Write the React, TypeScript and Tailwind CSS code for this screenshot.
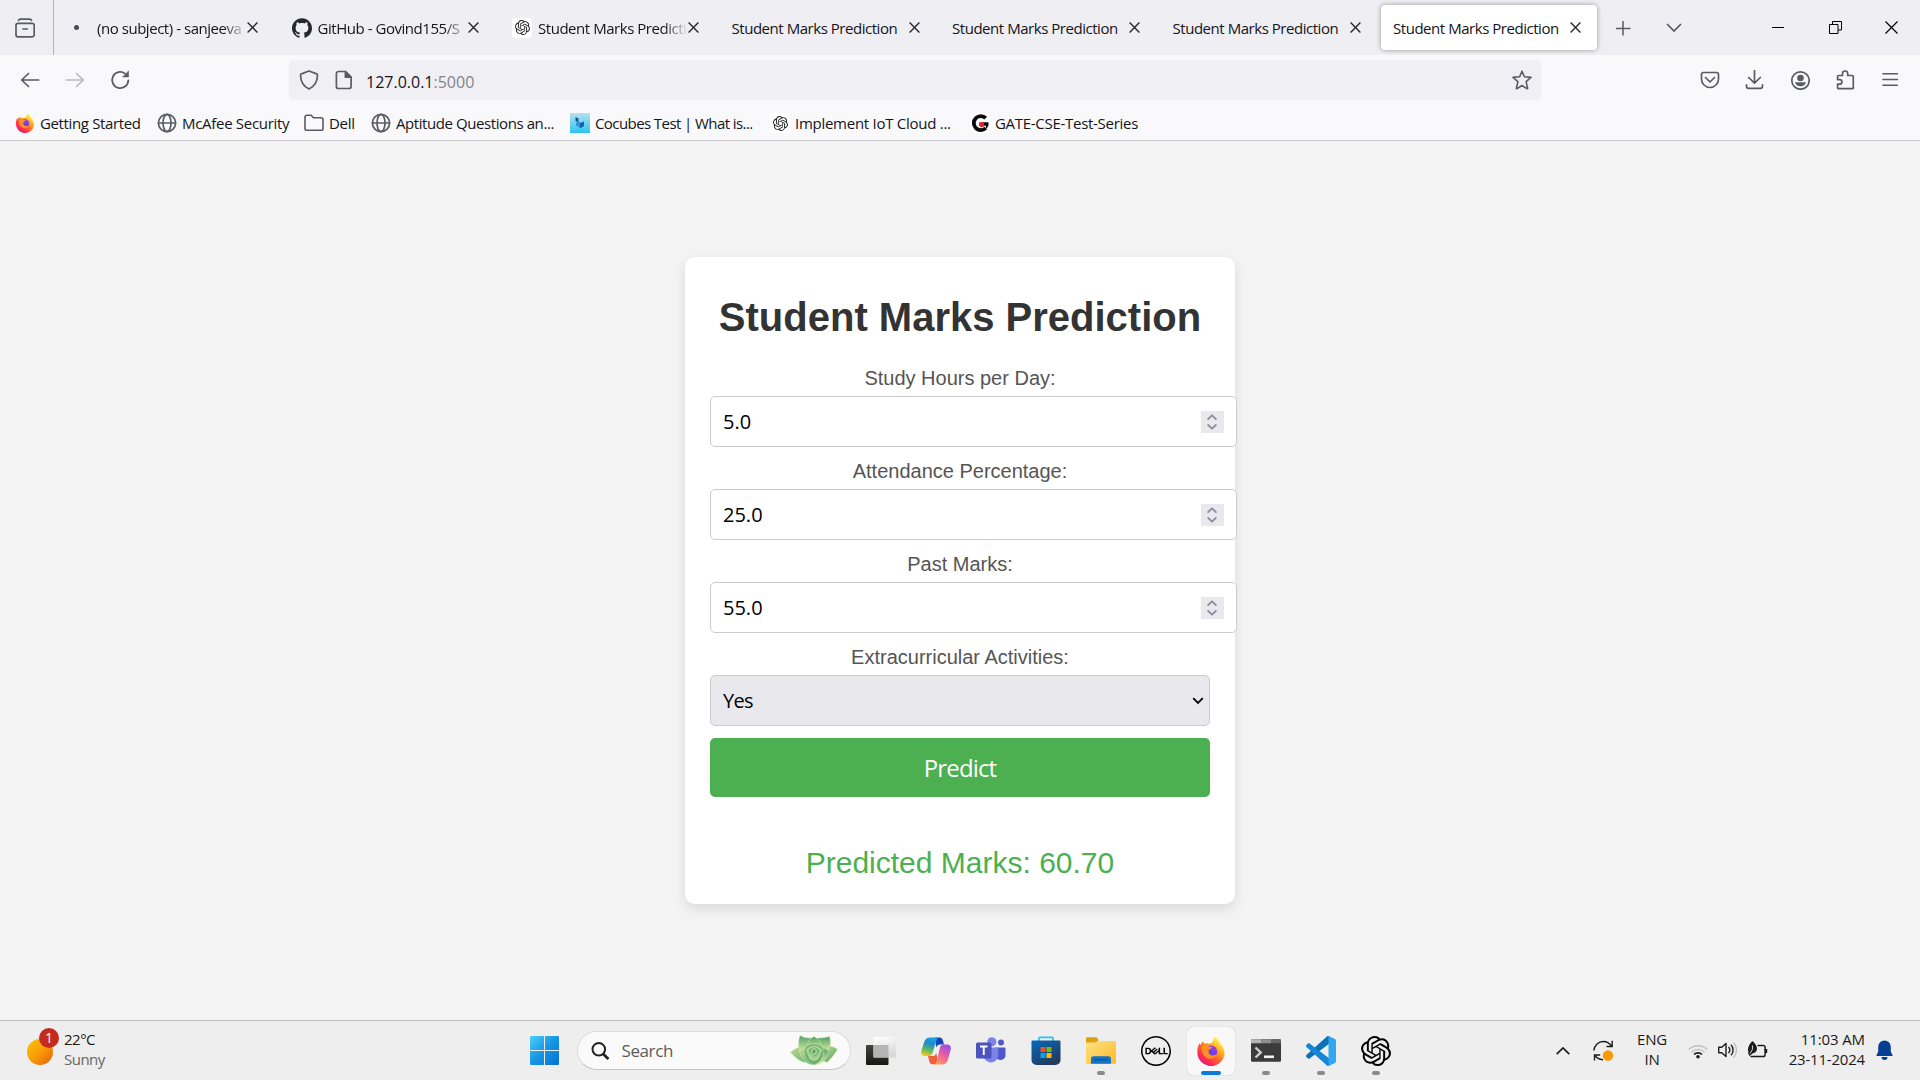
import React, { ReactNode } from "react";
import { SiDell, SiGithub, SiOpenai } from "react-icons/si";

type SvgProps = { className?: string };

function Stroke({ children, className = "size-5", width = 1.6, box = 20 }: { children: ReactNode; className?: string; width?: number; box?: number }) {
  return (
    <svg viewBox={`0 0 ${box} ${box}`} className={className} fill="none" stroke="currentColor" strokeWidth={width} strokeLinecap="round" strokeLinejoin="round">
      {children}
    </svg>
  );
}

function Firefox({ className, id }: SvgProps & { id: string }) {
  return (
    <svg viewBox="0 0 32 32" className={className}>
      <defs>
        <linearGradient id={`${id}-b`} x1="0.85" y1="0.1" x2="0.2" y2="0.95">
          <stop offset="0.05" stopColor="#fff44f" />
          <stop offset="0.3" stopColor="#ffb01f" />
          <stop offset="0.55" stopColor="#ff6a2c" />
          <stop offset="0.8" stopColor="#ff2b50" />
          <stop offset="1" stopColor="#e31587" />
        </linearGradient>
        <linearGradient id={`${id}-p`} x1="0.8" y1="0" x2="0.2" y2="1">
          <stop offset="0" stopColor="#a13bf0" />
          <stop offset="1" stopColor="#4b3fd0" />
        </linearGradient>
      </defs>
      <path fill={`url(#${id}-b)`} d="M20.2 0.8c3 2 4.6 4.300 5.200 6.900 1.400 0.900 2.500 2.200 3.200 3.700 1.600 3.200 2.200 6.200 1.600 9.200A14.500 14.500 0 0 1 1.500 17.500C1.200 13 2.500 9.800 4.100 7.500c0.100 1 0.300 1.500 0.800 2.100C5.800 7.400 6.500 6.500 8 5.400c-0.100 1.300 0.200 2.200 1 2.800 1.500-0.500 3-0.500 4.500 0 2-0.200 3.400-0.700 4.300-2C18.300 4.300 18.800 2.200 20.200 0.800z" />
      <circle cx="16" cy="16.800" r="6.700" fill={`url(#${id}-p)`} />
      <path fill="#ff9022" d="M6.500 11.200c2-1.800 5-1.700 7 0.100 1.200 0.200 2.600 0.300 3.800 0.400-0.500 1.800-2.300 2-3.600 2.900-0.600 1.800-0.300 3.600 1 5 2.700 2 5.800 1.100 7.500-1-1 4.900-6 7-10.200 5C7.500 21.500 5.500 16.500 6.500 11.200z" />
    </svg>
  );
}

function Globe() {
  return (
    <Stroke className="size-5 text-[#5b5b66]" width={1.7}>
      <circle cx="10" cy="10" r="8.600" />
      <ellipse cx="10" cy="10" rx="4" ry="8.600" />
      <path d="M1.500 10h17" />
    </Stroke>
  );
}

function OpenAiTile() {
  return (
    <span className="flex size-5 items-center justify-center rounded bg-white">
      <SiOpenai className="size-[15px] text-[#222]" />
    </span>
  );
}

function Cocubes() {
  return (
    <svg viewBox="0 0 20 20" className="size-5">
      <defs>
        <linearGradient id="coc" x1="0" y1="0" x2="0" y2="1">
          <stop offset="0" stopColor="#b4e2f0" />
          <stop offset="1" stopColor="#2cc4ef" />
        </linearGradient>
      </defs>
      <rect width="20" height="20" fill="url(#coc)" />
      <path fill="#17558f" d="M5.500 4l3 1.500v4l-3-1.500z" />
      <path fill="#2f93dc" d="M6 9.500l4-0.500v6l-4-2.500z" />
      <path fill="#1460ae" d="M10 10l4-1.500v4.500l-4 2.500z" />
    </svg>
  );
}

function Gate() {
  return (
    <svg viewBox="0 0 20 20" className="size-5">
      <rect width="20" height="20" fill="#fff" />
      <path d="M15.800 5.200A7 7 0 1 0 15.800 15" fill="none" stroke="#0a0a0a" strokeWidth="3.800" />
      <path d="M11 9.300h7.500v3.200c-0.600 1.500-1.500 2.500-2.600 3.200v-3h-2z" fill="#0a0a0a" />
      <path d="M9 9.200h5v4.200l-3 0.800-2-2z" fill="#ee1c25" />
    </svg>
  );
}

function CloseX({ className = "size-[11px]" }: SvgProps) {
  return (
    <svg viewBox="0 0 11 11" className={className} stroke="#25252c" strokeWidth="1.350" fill="none">
      <path d="M0.600 0.600l9.800 9.800M10.400 0.600L0.600 10.400" />
    </svg>
  );
}

type TabInfo = { title: string; icon?: ReactNode; active?: boolean; fade?: boolean };

const tabs: TabInfo[] = [
  { title: "(no subject) - sanjeeva", icon: <span className="ml-[3px] size-[5px] rounded-full bg-[#4a4a55]" />, fade: true },
  { title: "GitHub - Govind155/S", icon: <SiGithub className="size-5 text-[#24292f]" />, fade: true },
  { title: "Student Marks Prediction", icon: <OpenAiTile />, fade: true },
  { title: "Student Marks Prediction" },
  { title: "Student Marks Prediction" },
  { title: "Student Marks Prediction" },
  { title: "Student Marks Prediction", active: true },
];

function Tab({ tab }: { tab: TabInfo }) {
  return (
    <div className={`flex h-[45px] w-[216px] shrink-0 items-center rounded pl-3 ${tab.active ? "bg-white shadow-[0_0_5px_rgba(0,0,0,0.38)]" : ""}`}>
      {tab.icon && <span className="flex w-[27px] shrink-0 items-center pl-px">{tab.icon}</span>}
      <span
        className={`overflow-hidden whitespace-nowrap text-[15px] leading-5 tracking-[-0.46px] ${
          tab.icon ? "w-[150px]" : "w-[177px]"
        } ${tab.fade ? "[mask-image:linear-gradient(to_right,black_84%,transparent_100%)]" : ""}`}
      >
        {tab.title}
      </span>
      <CloseX />
    </div>
  );
}

function TabStrip() {
  return (
    <div className="flex h-[55px] items-center bg-[#efeef3]">
      <div className="flex h-full w-[54px] shrink-0 items-center border-r border-[#b4b3ba] pl-[15px] text-[#5b5b66]">
        <Stroke width={1.700}>
          <rect x="1" y="5.300" width="18.200" height="13.500" rx="2" />
          <path d="M3.500 2.300Q4 1.200 5.200 1.200h9.600q1.200 0 1.700 1.100M8 11h4.200" />
        </Stroke>
      </div>
      <div className="ml-1 flex gap-[4.5px]">
        {tabs.map((t, i) => (
          <Tab key={i} tab={t} />
        ))}
      </div>
      <svg viewBox="0 0 16 16" className="ml-[18px] size-4 text-[#5b5b66]" stroke="currentColor" strokeWidth="1.500">
        <path d="M8 1v14.500M1 8.500h14.500" />
      </svg>
      <svg viewBox="0 0 16 10" className="ml-[35px] h-2.5 w-4 text-[#5b5b66]" stroke="currentColor" strokeWidth="1.700" fill="none">
        <path d="M1 1l7 7 7-7" />
      </svg>
      <div className="ml-auto flex w-[148px] items-center text-black">
        <span className="h-px w-3 bg-black" />
        <svg viewBox="0 0 13 13" className="ml-[45px] size-[13px]" fill="none" stroke="currentColor" strokeWidth="1">
          <path d="M0.500 3.500h8.500v9h-8.500zM3.500 3.500v-3h9v8.500h-3.500" />
        </svg>
        <svg viewBox="0 0 13 13" className="ml-[43px] size-[13px]" stroke="currentColor" strokeWidth="1.200">
          <path d="M0.500 0.500l12 12M12.500 0.500l-12 12" />
        </svg>
      </div>
    </div>
  );
}

function Toolbar() {
  return (
    <div className="flex h-[50px] items-center text-[#5b5b66]">
      <div className="flex w-[289px] shrink-0 items-center gap-[25px] pl-5">
        <Stroke width={1.700}>
          <path d="M1.700 10h17M8.500 3.500L1.700 10l6.800 6.500" />
        </Stroke>
        <span className="opacity-40">
          <Stroke width={1.700}>
            <path d="M1.300 10h17M11.500 3.500l6.800 6.500-6.800 6.500" />
          </Stroke>
        </span>
        <Stroke width={1.800}>
          <path d="M18.300 10.500a8.100 8.100 0 1 1-3.200-6.900" />
          <path d="M18.500 1.300v5.600h-5.600z" fill="currentColor" strokeWidth="0.600" />
        </Stroke>
      </div>
      <div className="flex h-10 w-[1252px] items-center rounded-[5px] bg-[#f0eff4] pl-[10px] pr-[9px]">
        <Stroke width={1.700}>
          <path d="M10 1L17.600 3.900c.6.200.9.700.9 1.300-.2 6-2.500 11-8.500 13.800C4 16.200 1.700 11.200 1.500 5.200c0-.6.300-1.100.9-1.300z" />
        </Stroke>
        <span className="ml-[15px]">
          <Stroke width={1.700}>
            <path d="M4.400 1.500h7l5.700 5.700v9.300a2 2 0 0 1-2 2H4.400a2 2 0 0 1-2-2v-13a2 2 0 0 1 2-2z" />
            <path d="M11.400 1.700v5.500h5.500z" fill="currentColor" />
          </Stroke>
        </span>
        <span className="ml-3 mt-[3px] text-[16px] leading-5 text-[#15141a]">
          127.0.0.1<span className="text-[#85848c]">:5000</span>
        </span>
        <span className="ml-auto">
          <Stroke width={1.600}>
            <path d="M10 1.200l2.400 5.600 6.600.6-4.900 4.200 1.500 6.600c.1.400-.3.700-.7.500L10 15.500l-4.900 3.200c-.4.200-.8-.1-.7-.5l1.500-6.600L1 7.400l6.600-.6z" />
          </Stroke>
        </span>
      </div>
      <div className="ml-[159px] flex items-center gap-[25px]">
        <Stroke width={1.700}>
          <path d="M3.500 2.500h13a2 2 0 0 1 2 2V9a8.500 8.500 0 0 1-17 0V4.500a2 2 0 0 1 2-2zM5.500 7.500L10 12l4.500-4.500" />
        </Stroke>
        <Stroke width={1.700}>
          <path d="M9.500 .5v12.300M3.700 7.500l5.800 5.600 5.800-5.600M1.500 14.800v1.500a2 2 0 0 0 2 2h12a2 2 0 0 0 2-2v-1.500" />
        </Stroke>
        <Stroke width={1.700}>
          <circle cx="10.500" cy="10.500" r="8.700" />
          <circle cx="10.500" cy="8" r="3.300" fill="currentColor" stroke="none" />
          <path d="M5 12.300h11c-.6 2.500-2.700 4-5.500 4s-4.900-1.500-5.500-4z" fill="currentColor" stroke="none" />
        </Stroke>
        <Stroke width={1.700}>
          <path d="M7.500 5.500V3.600a2.600 2.600 0 0 1 5.200 0v1.900h4.600a1 1 0 0 1 1 1v11.200a1 1 0 0 1-1 1H3.600a1 1 0 0 1-1-1v-3.500h2a2.300 2.300 0 0 0 0-4.600h-2V6.500a1 1 0 0 1 1-1z" />
        </Stroke>
        <Stroke width={1.600}>
          <path d="M3 3.700h14.400M3 9.500h14.400M3 15.300h14.400" />
        </Stroke>
      </div>
    </div>
  );
}

function Bookmarks() {
  const item = "flex shrink-0 items-center gap-[5px]";
  return (
    <div className="flex h-9 items-center pl-[15px] text-[15px] leading-5">
      <div className={`${item} w-[142px]`}>
        <Firefox id="ffs" className="size-5" />
        <span className="tracking-[-0.36px]">Getting Started</span>
      </div>
      <div className={`${item} w-[147px] gap-1`}>
        <Globe />
        <span className="tracking-[-0.3px]">McAfee Security</span>
      </div>
      <div className={`${item} w-[67px]`}>
        <span className="text-[#5b5b66]">
          <Stroke width={1.600}>
            <path d="M2.800 2.200h4.400l2.200 2.600h7.800a1.800 1.800 0 0 1 1.800 1.800v8.800a1.800 1.800 0 0 1-1.800 1.800H2.800A1.800 1.800 0 0 1 1 15.400V4a1.800 1.800 0 0 1 1.800-1.800z" />
          </Stroke>
        </span>
        <span className="tracking-[-0.3px]">Dell</span>
      </div>
      <div className={`${item} w-[199px] gap-1`}>
        <Globe />
        <span className="tracking-[-0.42px]">Aptitude Questions an...</span>
      </div>
      <div className={`${item} w-[200px]`}>
        <Cocubes />
        <span className="tracking-[-0.58px]">Cocubes Test | What is...</span>
      </div>
      <div className={`${item} w-[200px]`}>
        <OpenAiTile />
        <span className="tracking-[-0.27px]">Implement IoT Cloud ...</span>
      </div>
      <div className={`${item} gap-1`}>
        <Gate />
        <span className="tracking-[-0.29px]">GATE-CSE-Test-Series</span>
      </div>
    </div>
  );
}

function FieldLabel({ children }: { children: ReactNode }) {
  return <p className="mb-1.5 text-center text-[20px] leading-[23px] text-[#555]">{children}</p>;
}

function NumberField({ label, value }: { label: string; value: string }) {
  return (
    <div className="mb-[13px]">
      <FieldLabel>{label}</FieldLabel>
      <div className="flex h-[51px] w-[527px] items-center justify-between rounded-[5px] border border-[#ccc] bg-white pl-3 pr-[12.5px] font-['Open_Sans',sans-serif] text-[20px] leading-7 text-black">
        <span>{value}</span>
        <span className="flex h-[22px] w-[23px] items-center justify-center bg-[#e9e9ed]">
          <svg viewBox="0 0 10 16" className="h-4 w-2.5" fill="none" stroke="#8f8f9d" strokeWidth="1.800" strokeLinecap="round" strokeLinejoin="round">
            <path d="M1.200 5L5 1.300 8.800 5M1.200 11L5 14.700 8.800 11" />
          </svg>
        </span>
      </div>
    </div>
  );
}

function PredictionCard() {
  return (
    <div className="mt-[116px] h-[647px] w-[550px] rounded-[10px] bg-white px-[25px] pt-[37px] font-['Liberation_Sans',Arial,sans-serif] shadow-[0_5px_12px_rgba(0,0,0,0.1)]">
      <h1 className="mb-[27px] whitespace-nowrap text-center text-[40px] font-bold leading-[46px] text-[#333]">Student Marks Prediction</h1>
      <NumberField label="Study Hours per Day:" value="5.0" />
      <NumberField label="Attendance Percentage:" value="25.0" />
      <NumberField label="Past Marks:" value="55.0" />
      <FieldLabel>Extracurricular Activities:</FieldLabel>
      <div className="flex h-[51px] items-center justify-between rounded-[5px] border border-[#ccc] bg-[#e9e9ed] pl-3 pr-[5px] font-['Open_Sans',sans-serif] text-[20px] leading-7 text-black">
        <span className="tracking-[-0.7px]">Yes</span>
        <svg viewBox="0 0 12 8" className="h-2 w-3" fill="none" stroke="#000" strokeWidth="1.800">
          <path d="M1.200 1.200L6 6l4.800-4.800" />
        </svg>
      </div>
      <button className="mt-3 flex h-[59px] w-full items-center justify-center rounded-[5px] bg-[#4caf50] font-['Open_Sans',sans-serif] text-[24px] leading-8 tracking-[-0.85px] text-white">Predict</button>
      <p className="mt-[48px] text-center text-[30px] leading-[35px] text-[#4caf50]">Predicted Marks: 60.70</p>
    </div>
  );
}

function Succulent() {
  return (
    <svg viewBox="0 0 48 31" className="h-[31px] w-12">
      <defs>
        <linearGradient id="leaf" x1="0" y1="0" x2="0" y2="1">
          <stop offset="0" stopColor="#4f9f68" />
          <stop offset="0.6" stopColor="#a6d08a" />
          <stop offset="1" stopColor="#dce9a0" />
        </linearGradient>
        <linearGradient id="leaf2" x1="0" y1="0" x2="1" y2="1">
          <stop offset="0" stopColor="#c5de97" />
          <stop offset="1" stopColor="#5aa86c" />
        </linearGradient>
      </defs>
      <g stroke="#d3e6aa" strokeWidth="0.500">
        <path fill="url(#leaf2)" d="M0.500 17.500Q6 12 14 11l9 11-9 5.500Q7 25 0.500 17.500z" />
        <path fill="url(#leaf2)" d="M47.500 14.500Q42 10 34 11l-9 11 12 5.500Q43 22 47.500 14.500z" />
        <path fill="url(#leaf)" d="M10 0.500Q15 3.500 21 3l3 12-14 3Q7 8 10 0.500z" />
        <path fill="url(#leaf)" d="M39.500 1.500Q34 3 28 3l-4 12 14 2Q42 9 39.500 1.500z" />
        <path fill="url(#leaf)" d="M24 1.500q6.500 3 6.500 9L24 15l-6.500-4.500q0-6 6.500-9z" />
        <path fill="url(#leaf2)" d="M9 16q5-4 12-3l3 17q-12-1-15-14z" />
        <path fill="url(#leaf)" d="M39 16q-5-4-12-3l-3 17q12-1 15-14z" />
        <path fill="#69b077" d="M14 16q2-7 10-7t10 7q-1 11-10 14-9-3-10-14z" />
        <path fill="#a9d28b" d="M16 15q4-4 8-4t8 4l-4 9q-4 3-8 0z" />
        <path fill="#4a9b62" d="M18.500 16q2-4 5.500-4t5.500 4q0 4-5.500 6-5-2-5.500-6z" />
        <path fill="#8ac580" d="M20.500 16q1-3 3.500-3t3.500 3-3.500 4.500-3.500-4.500z" />
        <circle cx="24" cy="16.500" r="1.700" fill="#3f8f5c" />
      </g>
    </svg>
  );
}

function Copilot() {
  return (
    <svg viewBox="0 0 30 28" className="h-7 w-[30px]">
      <defs>
        <linearGradient id="cp1" x1="0.600" y1="0" x2="0.300" y2="1">
          <stop offset="0" stopColor="#1a9fe6" />
          <stop offset="0.350" stopColor="#1f8fc9" />
          <stop offset="0.650" stopColor="#55b66a" />
          <stop offset="1" stopColor="#f2c91c" />
        </linearGradient>
        <linearGradient id="cp2" x1="0.700" y1="0" x2="0.200" y2="1">
          <stop offset="0" stopColor="#a04de8" />
          <stop offset="0.500" stopColor="#ee5f9d" />
          <stop offset="1" stopColor="#ffa05c" />
        </linearGradient>
      </defs>
      <path fill="#1842b8" d="M14 0.500h4.500c2.200 0 3 1.500 3.500 3.200l1 3.800h-4c-2 0-3 1-3.800 3z" />
      <path fill="#f0603f" d="M7 19h5c2 0 2.600-1 3.200-3l2 8.500c-.6 1.800-2 2.700-4 2.700h-2c-1.800 0-2.500-1.400-3-3.200z" />
      <path fill="url(#cp1)" d="M9 0.500h9.500c-2 .3-2.700 1.500-3.300 3.500l-3.700 12c-.6 2-1.600 3-3.800 3H4c-3.500 0-4.500-2.500-3.500-6L3.200 5C4.200 2 6 0.500 9 0.500z" />
      <path fill="url(#cp2)" d="M21 27.500H12.500c2-.3 2.700-1.500 3.300-3.500l3-13c.6-2 1.800-3.500 4-3.500H26c3.500 0 4.500 2.500 3.500 6L26.800 23c-1 3-2.800 4.500-5.800 4.500z" />
    </svg>
  );
}

function Teams() {
  return (
    <svg viewBox="0 0 30 27" className="h-[27px] w-[30px]">
      <circle cx="25" cy="5.500" r="3" fill="#5059c9" />
      <path d="M19 10.500h9.500a1 1 0 0 1 1 1V18a5 5 0 0 1-9 3z" fill="#5059c9" />
      <circle cx="15.800" cy="4.800" r="4.600" fill="#7b83eb" />
      <path d="M8 10.500h13a1.200 1.200 0 0 1 1.200 1.200V19a7.300 7.300 0 0 1-14.500 0z" fill="#7b83eb" />
      <rect x="0" y="5.500" width="15.500" height="16" rx="1.500" fill="#4b53bc" />
      <path d="M4 9.500h7.500M7.750 9.500v8.500" stroke="#fff" strokeWidth="1.900" />
    </svg>
  );
}

function Store() {
  return (
    <svg viewBox="0 0 30 29" className="h-[29px] w-[30px]">
      <defs>
        <linearGradient id="store" x1="0" y1="0" x2="0.600" y2="1">
          <stop offset="0" stopColor="#0669bd" />
          <stop offset="1" stopColor="#243a5e" />
        </linearGradient>
      </defs>
      <path d="M8 6V2.500a1.200 1.200 0 0 1 1.200-1.200h11.600a1.200 1.200 0 0 1 1.200 1.200V6" fill="none" stroke="#20c5f5" strokeWidth="1.700" />
      <path d="M0.500 5.500a1 1 0 0 1 1-1h27a1 1 0 0 1 1 1V24a5 5 0 0 1-5 5H5.500a5 5 0 0 1-5-5z" fill="url(#store)" />
      <path fill="#f25022" d="M9.500 11h5v5h-5z" />
      <path fill="#7fba00" d="M15.500 11h5v5h-5z" />
      <path fill="#00a4ef" d="M9.500 17h5v5h-5z" />
      <path fill="#ffb900" d="M15.500 17h5v5h-5z" />
    </svg>
  );
}

function Explorer() {
  return (
    <svg viewBox="0 0 30 27" className="h-[27px] w-[30px]">
      <defs>
        <linearGradient id="fold" x1="0" y1="0" x2="1" y2="1">
          <stop offset="0" stopColor="#ffe08a" />
          <stop offset="1" stopColor="#fdbb22" />
        </linearGradient>
      </defs>
      <path fill="#dd9f0f" d="M0 1.500A1.200 1.200 0 0 1 1.200 0.300h8.500q1 0 1.600.8L12.500 3l-2 4H0z" />
      <path fill="url(#fold)" d="M0 5.500h8.500q1 0 1.700-.7l.8-.8h17.800A1.200 1.200 0 0 1 30 5.200V25.500A1.200 1.200 0 0 1 28.800 26.700H1.200A1.200 1.200 0 0 1 0 25.500z" />
      <path fill="#1173c6" d="M5 26.700v-5a2.500 2.500 0 0 1 2.500-2.500h15a2.500 2.500 0 0 1 2.500 2.500v5z" />
      <path stroke="#0a4a86" strokeWidth="1.100" d="M8.500 22.800h13" />
    </svg>
  );
}

function Terminal() {
  return (
    <svg viewBox="0 0 30 23" className="h-[23px] w-[30px]">
      <rect x="0" y="0.300" width="30" height="22.400" rx="1.300" fill="#3b3b3b" />
      <path fill="#b5b5b5" d="M1.300 0.300h9.200v4H0V1.600A1.300 1.300 0 0 1 1.300 0.300z" />
      <path fill="#8e8e8e" d="M10.500 0.300h10v4h-10z" />
      <path fill="#666" d="M20.500 0.300h8.200A1.300 1.300 0 0 1 30 1.600v2.700h-9.500z" />
      <path stroke="#d0d0d0" strokeWidth="2.400" fill="none" d="M4.500 8.500l5.200 5-5.200 5" />
      <path fill="#f3f3f3" d="M13 16.500h10v2.600H13z" />
    </svg>
  );
}

function VsCode() {
  return (
    <svg viewBox="0 0 100 100" className="size-[30px]">
      <path fill="#0c71b8" d="M96.500 10.800L75.900 .9c-2.400-1.200-5.200-.7-7.100 1.200L1.300 63.600c-1.800 1.700-1.800 4.500 0 6.200l5.500 5c1.500 1.300 3.700 1.400 5.300.2L93.400 13.300c2.700-2 6.600-.1 6.600 3.300v-.2c0-2.400-1.400-4.600-3.500-5.600z" />
      <path fill="#1487d2" d="M96.500 89.200l-20.600 9.900c-2.400 1.200-5.200.7-7.100-1.200L1.300 36.400c-1.800-1.700-1.800-4.500 0-6.200l5.500-5c1.500-1.300 3.700-1.400 5.300-.2l81.300 61.700c2.700 2 6.600.1 6.600-3.300v.2c0 2.400-1.400 4.600-3.500 5.600z" />
      <path fill="#2fa7f2" d="M75.900 99.100c-2.400 1.200-5.200.7-7.100-1.200 2.300 2.300 6.200.7 6.200-2.600V4.700c0-3.300-3.900-4.900-6.200-2.600 1.900-1.900 4.700-2.400 7.100-1.200l20.600 9.900c2.100 1 3.500 3.200 3.500 5.600v67.200c0 2.400-1.400 4.600-3.500 5.600z" />
    </svg>
  );
}

function TaskItem({ children, state }: { children: ReactNode; state?: "running" | "active" }) {
  return (
    <div className={`relative flex h-12 w-12 shrink-0 items-center justify-center rounded-md ${state === "active" ? "bg-[#f8f8f8] shadow-[0_0_1px_rgba(0,0,0,0.3)]" : ""}`}>
      {children}
      {state === "active" && <span className="absolute bottom-0 left-3.5 h-1 w-5 rounded-full bg-[#0f79d6]" />}
      {state === "running" && <span className="absolute bottom-0 left-5 h-1 w-2 rounded-full bg-[#8a8a8a]" />}
    </div>
  );
}

function Taskbar() {
  return (
    <div className="flex h-[60px] w-full shrink-0 items-center border-t border-[#bdbdbd] bg-[#eee] text-[#1b1b1b]">
      <div className="flex w-[530px] shrink-0 items-center pl-[27px]">
        <div className="relative mb-0.5 h-[34px] w-[37px]">
          <span className="absolute left-0 top-1.5 size-[26px] rounded-full bg-linear-to-br from-[#fcc306] via-[#fa9c08] to-[#e05c08]" />
          <span className="absolute left-3 top-[-5px] flex size-5 items-center justify-center rounded-full bg-[#c42b1c] text-[14px] leading-none text-white">1</span>
        </div>
        <div className="mb-1 text-[15px] leading-5">
          <p className="tracking-[-0.5px]">22°C</p>
          <p className="tracking-[-0.5px] text-[#666]">Sunny</p>
        </div>
      </div>
      <svg viewBox="0 0 29 29" className="size-[29px] shrink-0">
        <defs>
          <linearGradient id="win" x1="0" y1="0" x2="1" y2="1">
            <stop offset="0" stopColor="#4cd0fc" />
            <stop offset="0.500" stopColor="#1795e2" />
            <stop offset="1" stopColor="#0672cf" />
          </linearGradient>
        </defs>
        <path fill="url(#win)" d="M1 0h13v14H0V1a1 1 0 0 1 1-1zM15 0h13a1 1 0 0 1 1 1v13H15zM0 15h14v14H1a1 1 0 0 1-1-1zM15 15h14v13a1 1 0 0 1-1 1H15z" />
      </svg>
      <div className="ml-[18px] flex h-[39px] w-[274px] shrink-0 items-center rounded-full border border-[#dcdcdc] border-b-[#c4c4c4] bg-[#fafafa] pl-[13px] pr-3">
        <svg viewBox="0 0 18 18" className="size-[18px]" fill="none" stroke="#222" strokeWidth="2">
          <circle cx="7.800" cy="7.300" r="6.300" />
          <path d="M12.300 12l5 5" strokeWidth="2.600" />
        </svg>
        <span className="ml-[12.5px] text-[17px] leading-6 tracking-[-0.4px] text-[#5c5c5c]">Search</span>
        <span className="ml-auto">
          <Succulent />
        </span>
      </div>
      <div className="ml-[6px] flex items-center gap-[7px]">
        <TaskItem>
          <svg viewBox="0 0 30 28" className="h-7 w-[30px]">
            <defs>
              <linearGradient id="tvd" x1="0" y1="0" x2="0" y2="1">
                <stop offset="0" stopColor="#434341" />
                <stop offset="1" stopColor="#171715" />
              </linearGradient>
              <linearGradient id="tvl" x1="0" y1="0" x2="0.300" y2="1">
                <stop offset="0" stopColor="#fff" />
                <stop offset="1" stopColor="#d8d8d8" />
              </linearGradient>
            </defs>
            <rect x="0" y="8" width="22.500" height="20" rx="1" fill="url(#tvd)" />
            <rect x="7.500" y="0" width="22.500" height="20.500" rx="1" fill="url(#tvl)" />
            <rect x="7.500" y="8" width="15" height="12.500" fill="#b4b4b4" />
          </svg>
        </TaskItem>
        <TaskItem><Copilot /></TaskItem>
        <TaskItem><Teams /></TaskItem>
        <TaskItem><Store /></TaskItem>
        <TaskItem state="running"><Explorer /></TaskItem>
        <TaskItem><SiDell className="size-[30px] text-black" /></TaskItem>
        <TaskItem state="active"><Firefox id="ffl" className="size-[30px]" /></TaskItem>
        <TaskItem state="running"><Terminal /></TaskItem>
        <TaskItem state="running"><VsCode /></TaskItem>
        <TaskItem state="running"><SiOpenai className="size-[30px] text-black" /></TaskItem>
      </div>
      <div className="ml-auto flex w-[365px] shrink-0 items-center">
        <svg viewBox="0 0 14 8" className="ml-px h-2 w-3.5" fill="none" stroke="#1b1b1b" strokeWidth="1.700">
          <path d="M0.700 7.200L7 1l6.300 6.200" />
        </svg>
        <svg viewBox="0 0 21 21" className="ml-[23px] size-[21px]" fill="none" stroke="#1b1b1b" strokeWidth="1.400">
          <path d="M0.800 10.500C1.500 5 5.500 1.500 10.300 1.500c3.300 0 6.200 1.700 8.200 4.500M19.200 0.800v5.700h-5.700M10 19.800C6.500 19.500 3.500 18 1.800 15.200M1.500 20.500v-5.500h5.700" />
          <circle cx="15" cy="15.500" r="5.200" fill="#ff9800" stroke="none" />
        </svg>
        <div className="mb-[3px] ml-[22px] w-8 text-center text-[15px] leading-5 tracking-[-0.2px]">
          <p>ENG</p>
          <p>IN</p>
        </div>
        <svg viewBox="0 0 20 16" className="ml-5 h-4 w-5" fill="none" strokeWidth="1.400">
          <path d="M0.800 6.500a13 13 0 0 1 18.400 0M3.500 9.200a9.200 9.200 0 0 1 13 0" stroke="#c3c3c3" />
          <path d="M6 11.500a5.800 5.800 0 0 1 8 0" stroke="#1b1b1b" strokeWidth="1.700" />
          <circle cx="10" cy="13.800" r="1.800" fill="#1b1b1b" />
        </svg>
        <svg viewBox="0 0 20 18" className="mb-0.5 ml-2.5 h-[18px] w-5" fill="none" stroke="#1b1b1b" strokeWidth="1.400" strokeLinejoin="round">
          <path d="M0.700 6.200h3L8 2.500v13l-4.300-3.700h-3zM10.500 6a4.500 4.500 0 0 1 0 6M13 3.800a7.500 7.500 0 0 1 0 10.400" />
          <path d="M15.500 1.500a11 11 0 0 1 0 15" stroke="#c3c3c3" />
        </svg>
        <svg viewBox="0 0 21 17" className="mb-[3px] ml-[9px] h-[17px] w-[21px]" fill="none" stroke="#1b1b1b" strokeWidth="1.500">
          <path d="M10.500 4.500h5.800a1.800 1.800 0 0 1 1.800 1.800v7.400a1.800 1.800 0 0 1-1.800 1.800H3.500" />
          <path d="M19 8v4" strokeWidth="2.500" />
          <path d="M5.500 0q4.500 4 4.500 7.500 0 4-4.500 5l-3 2.500q-1.500-2-1.500-6 0-5 4.500-9z" fill="#1b1b1b" stroke="none" />
          <path d="M5.500 4.500q1 4-2.500 8" stroke="#eee" strokeWidth="0.900" />
        </svg>
        <div className="mb-[3px] ml-auto w-20 text-right text-[15px] leading-5">
          <p className="tracking-[-0.1px]">11:03 AM</p>
          <p className="tracking-[-0.2px]">23-11-2024</p>
        </div>
        <svg viewBox="0 0 17 20" className="mb-px ml-[11px] mr-[27px] h-5 w-[17px]" fill="#053f92">
          <path d="M8.500 0.500a6.300 6.300 0 0 1 6.300 6.300v5L16.500 15v1H0.500v-1l1.700-3.200v-5A6.300 6.300 0 0 1 8.500 0.500zM5.500 17h6a3 3 0 0 1-6 0z" />
        </svg>
      </div>
    </div>
  );
}

export default function App() {
  return (
    <div className="flex h-[1080px] w-[1920px] flex-col overflow-hidden bg-[#f3f3f3] font-['Open_Sans',sans-serif] text-[#15141a]">
      <header className="h-[141px] shrink-0 border-b border-[#c8c8cb] bg-[#f9f9fb]">
        <TabStrip />
        <Toolbar />
        <Bookmarks />
      </header>
      <main className="flex min-h-0 flex-1 items-start justify-center">
        <PredictionCard />
      </main>
      <Taskbar />
    </div>
  );
}
